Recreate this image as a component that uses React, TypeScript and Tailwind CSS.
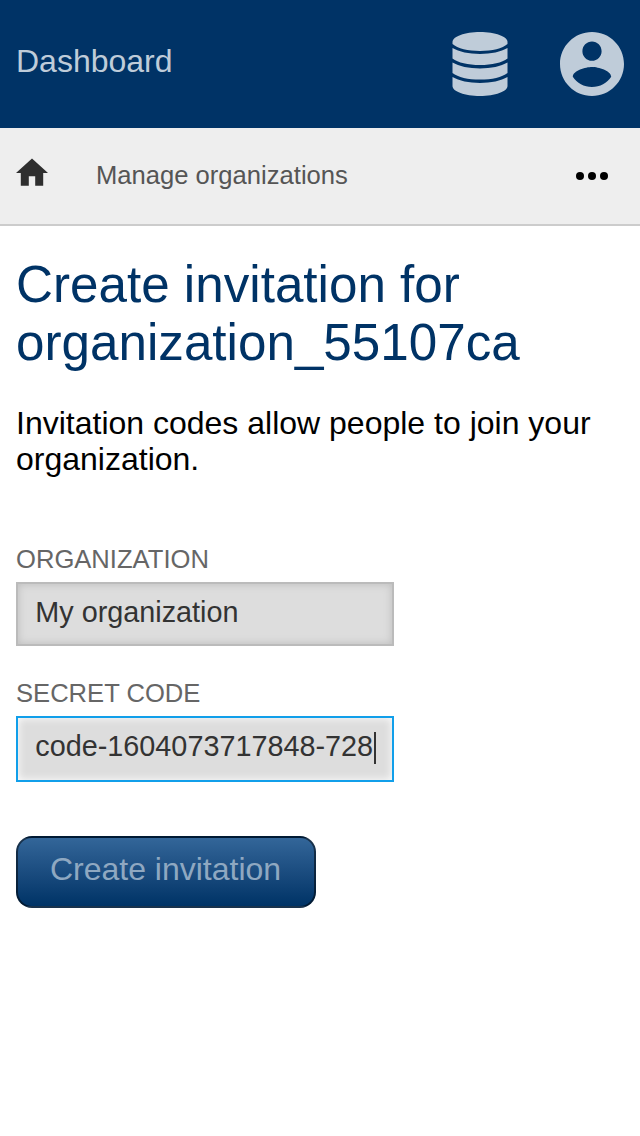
export default function App() {
  return (
    <div className="min-h-[1136px] w-[640px] bg-white font-['Liberation_Sans',Arial,sans-serif] text-black">
      <header className="flex h-32 items-center bg-[#003366] px-4 text-[#bfccd9]">
        <span className="flex-1 pb-1.5 text-[32px] leading-9">Dashboard</span>
        <svg className="mr-[52px] h-16 w-14" viewBox="0 0 56 64" fill="currentColor">
          <path d="M28 0C43.200 0 55.500 4.500 55.500 10V12C50.500 16.500 40 18.900 28 18.900S5.500 16.500 .5 12V10C.5 4.500 12.800 0 28 0Z" />
          <path d="M.5 16C7 19.900 17 21.900 28 21.900S49 19.900 55.500 16V26.500C50 30.800 40 33 28 33S6 30.800 .5 26.500Z" />
          <path d="M.5 30.500C7 34.400 17 36.400 28 36.400S49 34.400 55.500 30.500V41C50 45.300 40 47.600 28 47.600S6 45.300 .5 41Z" />
          <path d="M.5 45C7 48.900 17 50.900 28 50.900S49 48.900 55.500 45V54C55.500 59.500 43.200 64 28 64S.5 59.500 .5 54Z" />
        </svg>
        <svg className="h-16 w-16" viewBox="2 2 20 20" fill="currentColor">
          <path d="M12 2C6.480 2 2 6.480 2 12s4.480 10 10 10 10-4.480 10-10S17.520 2 12 2zm0 3c1.660 0 3 1.340 3 3s-1.340 3-3 3-3-1.340-3-3 1.340-3 3-3zm0 14.200c-2.500 0-4.710-1.280-6-3.220.03-1.990 4-3.080 6-3.080 1.990 0 5.970 1.090 6 3.080-1.290 1.940-3.500 3.220-6 3.220z" />
        </svg>
      </header>
      <nav className="flex h-[98px] items-center border-b-2 border-[#cccccc] bg-[#eeeeee] pl-4 pr-8">
        <svg className="mb-1.5 h-8 w-8" viewBox="2 2 20 20" fill="#2e2e2e"><path d="M10 20v-6h4v6h5v-8h3L12 3 2 12h3v8z" /></svg>
        <span className="ml-12 flex-1 pb-0.5 text-[25.6px] text-[#555]">Manage organizations</span>
        <svg className="h-8 w-8" viewBox="0 0 32 32"><circle cx="4" cy="16" r="4" /><circle cx="16" cy="16" r="4" /><circle cx="28" cy="16" r="4" /></svg>
      </nav>
      <main className="flex flex-col items-start px-4 pt-[30px]">
        <h1 className="text-[51.2px] leading-[58px] text-[#003366]">Create invitation for<br />organization_55107ca</h1>
        <p className="mt-[33px] text-[32px] leading-9">Invitation codes allow people to join your organization.</p>
        <label className="mt-[67px] text-[25.6px] leading-[30px] text-[#666]">ORGANIZATION</label>
        <div className="mt-2 flex h-16 w-[378px] items-center border-2 border-[#bbb] bg-[#ddd] pb-0.5 pl-[17.280px] text-[28.8px] text-[#333] shadow-[inset_0_0_8px_#bbb]">My organization</div>
        <label className="mt-8 text-[25.6px] leading-[30px] text-[#666]">SECRET CODE</label>
        <div className="mt-2 flex h-[66px] w-[378px] items-center border-2 border-[#119fea] bg-[#ddd] pb-0.5 pl-[17.280px] text-[28.8px] text-[#333] shadow-[inset_0_0_8px_#fff]">
          <span className="pb-0.5">code-1604073717848-728</span>
          <span className="ml-px h-8 w-0.5 bg-[#333]" />
        </div>
        <button className="mt-[54px] h-[72px] w-[300px] rounded-2xl border-2 border-black/50 bg-linear-to-b from-[#336699] to-[#003366] pb-1.5 pr-px text-[32px] leading-9 text-[#8fa8c1]">Create invitation</button>
      </main>
    </div>
  );
}
